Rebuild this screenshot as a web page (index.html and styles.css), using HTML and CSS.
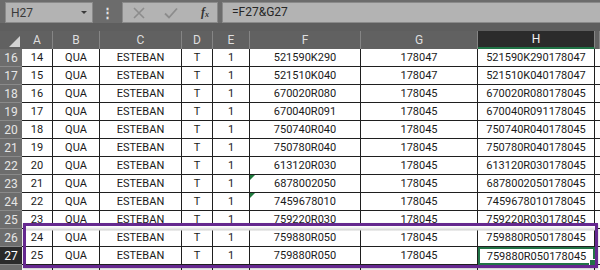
FILE: index.html
```html
<!DOCTYPE html>
<html>
<head>
<meta charset="utf-8">
<link rel="stylesheet" href="styles.css">
</head>
<body>
<div class="toolbar">
  <div class="namebox"><span class="ref">H27</span><span class="dd"></span></div>
  <div class="grip">⋮</div>
  <div class="btns">
    <svg class="ico" width="14" height="14" viewBox="0 0 14 14"><path d="M2 2 L12 12 M12 2 L2 12" stroke="#8c8c8c" stroke-width="1.6" fill="none"/></svg>
    <svg class="ico" width="16" height="14" viewBox="0 0 16 14"><path d="M2 7.5 L6 11.5 L14 2.5" stroke="#8c8c8c" stroke-width="1.8" fill="none"/></svg>
    <span class="fx">f<sub>x</sub></span>
  </div>
  <div class="formula">=F27&amp;G27</div>
</div>
<div class="band"></div>
<div class="sheetwrap">
  <div class="sheet">
    <div class="ch corner"><span class="tri"></span></div>
    <div class="ch">A</div><div class="ch">B</div><div class="ch">C</div><div class="ch">D</div><div class="ch">E</div><div class="ch">F</div><div class="ch">G</div><div class="ch sel">H</div><div class="ch"></div>

    <div class="rh">16</div><div class="c">14</div><div class="c">QUA</div><div class="c">ESTEBAN</div><div class="c">T</div><div class="c">1</div><div class="c">521590K290</div><div class="c">178047</div><div class="c">521590K290178047</div><div class="c x"></div>
    <div class="rh">17</div><div class="c">15</div><div class="c">QUA</div><div class="c">ESTEBAN</div><div class="c">T</div><div class="c">1</div><div class="c">521510K040</div><div class="c">178047</div><div class="c">521510K040178047</div><div class="c x"></div>
    <div class="rh">18</div><div class="c">16</div><div class="c">QUA</div><div class="c">ESTEBAN</div><div class="c">T</div><div class="c">1</div><div class="c">670020R080</div><div class="c">178045</div><div class="c">670020R080178045</div><div class="c x"></div>
    <div class="rh">19</div><div class="c">17</div><div class="c">QUA</div><div class="c">ESTEBAN</div><div class="c">T</div><div class="c">1</div><div class="c">670040R091</div><div class="c">178045</div><div class="c">670040R091178045</div><div class="c x"></div>
    <div class="rh">20</div><div class="c">18</div><div class="c">QUA</div><div class="c">ESTEBAN</div><div class="c">T</div><div class="c">1</div><div class="c">750740R040</div><div class="c">178045</div><div class="c">750740R040178045</div><div class="c x"></div>
    <div class="rh">21</div><div class="c">19</div><div class="c">QUA</div><div class="c">ESTEBAN</div><div class="c">T</div><div class="c">1</div><div class="c">750780R040</div><div class="c">178045</div><div class="c">750780R040178045</div><div class="c x"></div>
    <div class="rh">22</div><div class="c">20</div><div class="c">QUA</div><div class="c">ESTEBAN</div><div class="c">T</div><div class="c">1</div><div class="c">613120R030</div><div class="c">178045</div><div class="c">613120R030178045</div><div class="c x"></div>
    <div class="rh">23</div><div class="c">21</div><div class="c">QUA</div><div class="c">ESTEBAN</div><div class="c">T</div><div class="c">1</div><div class="c txt">6878002050</div><div class="c">178045</div><div class="c">6878002050178045</div><div class="c x"></div>
    <div class="rh">24</div><div class="c">22</div><div class="c">QUA</div><div class="c">ESTEBAN</div><div class="c">T</div><div class="c">1</div><div class="c txt">7459678010</div><div class="c">178045</div><div class="c">7459678010178045</div><div class="c x"></div>
    <div class="rh">25</div><div class="c">23</div><div class="c">QUA</div><div class="c">ESTEBAN</div><div class="c">T</div><div class="c">1</div><div class="c">759220R030</div><div class="c">178045</div><div class="c">759220R030178045</div><div class="c x"></div>
    <div class="rh">26</div><div class="c">24</div><div class="c">QUA</div><div class="c">ESTEBAN</div><div class="c">T</div><div class="c">1</div><div class="c">759880R050</div><div class="c">178045</div><div class="c">759880R050178045</div><div class="c x"></div>
    <div class="rh sel">27</div><div class="c">25</div><div class="c">QUA</div><div class="c">ESTEBAN</div><div class="c">T</div><div class="c">1</div><div class="c">759880R050</div><div class="c">178045</div><div class="c active">759880R050178045</div><div class="c x"></div>
    <div class="rh last"></div><div class="c e"></div><div class="c e"></div><div class="c e"></div><div class="c e"></div><div class="c e"></div><div class="c e"></div><div class="c e"></div><div class="c e"></div><div class="c e x"></div>
  </div>
  <div class="purple"></div>
</div>
</body>
</html>
```
FILE: styles.css
```css
html, body {
  margin: 0;
  padding: 0;
  background: #5e5e5e;
  overflow: hidden;
}
body {
  width: 600px;
  height: 270px;
  font-family: Roboto, "Liberation Sans", sans-serif;
}
.toolbar {
  height: 23px;
  background: #6c6c6c;
  display: flex;
  align-items: flex-start;
  padding-top: 2px;
  box-sizing: border-box;
}
.namebox {
  margin-left: 5px;
  width: 88px;
  height: 21px;
  box-sizing: border-box;
  background: #b3b3b3;
  border: 1px solid #8a8a8a;
  display: flex;
  align-items: center;
  justify-content: space-between;
  padding: 0 5px 0 5px;
  font-size: 12px;
  color: #3a3a3a;
}
.dd {
  width: 0;
  height: 0;
  border-left: 3px solid transparent;
  border-right: 3px solid transparent;
  border-top: 3px solid #3a3a3a;
}
.grip {
  width: 29px;
  text-align: center;
  color: #e4e4e4;
  font-size: 13px;
  line-height: 21px;
  font-weight: bold;
}
.btns {
  width: 96px;
  height: 21px;
  box-sizing: border-box;
  background: #b3b3b3;
  border: 1px solid #8a8a8a;
  display: flex;
  align-items: center;
  padding-left: 9px;
  gap: 17px;
}
.fx {
  font-family: "Liberation Serif", serif;
  font-style: italic;
  font-weight: bold;
  font-size: 12px;
  color: #333;
  margin-left: 5px;
}
.fx sub {
  font-size: 8px;
  vertical-align: -1px;
}
.formula {
  margin-left: 4px;
  flex: 1;
  height: 21px;
  box-sizing: border-box;
  background: #b3b3b3;
  border: 1px solid #8a8a8a;
  border-right: none;
  font-size: 12px;
  color: #262626;
  line-height: 19px;
  padding-left: 9px;
}
.band {
  height: 8px;
  background: #5e5e5e;
}
.sheetwrap {
  position: relative;
}
.sheet {
  display: grid;
  grid-template-columns: 22px 31px 47px 82px 31px 37px 111px 117px 117px 1fr;
  grid-template-rows: 18px;
  grid-auto-rows: 18px;
  font-size: 11px;
}
.ch {
  background: #616161;
  color: #dedede;
  font-size: 12px;
  border-right: 1px solid #858585;
  box-sizing: border-box;
  display: flex;
  align-items: center;
  justify-content: center;
}
.ch.corner {
  position: relative;
  border-right: none;
}
.tri {
  position: absolute;
  right: 2px;
  bottom: 2px;
  width: 0;
  height: 0;
  border-left: 11px solid transparent;
  border-bottom: 11px solid #d2d2d2;
}
.ch.sel {
  background: #2b2b2b;
  color: #f2f2f2;
  border-bottom: 2px solid #217346;
}
.rh {
  background: #6d6d6d;
  color: #e6e6e6;
  font-size: 12px;
  box-sizing: border-box;
  border-bottom: 1px solid #8a8a8a;
  display: flex;
  align-items: center;
  justify-content: center;
}
.rh.sel {
  background: #2a2a2a;
  color: #ffffff;
}
.c {
  background: #fff;
  color: #1a1a1a;
  box-sizing: border-box;
  border-right: 1px solid #1f1f1f;
  border-bottom: 1px solid #1f1f1f;
  display: flex;
  align-items: center;
  justify-content: center;
  white-space: nowrap;
  overflow: hidden;
}
.c.x {
  border-right: none;
}
.c.e {
  border-bottom: none;
}
.c.txt {
  position: relative;
}
.c.txt::before {
  content: "";
  position: absolute;
  left: 0;
  top: 0;
  width: 0;
  height: 0;
  border-top: 5px solid #1f7a3d;
  border-right: 5px solid transparent;
}
.c.active {
  position: relative;
  overflow: visible;
  border: 2px solid #217346;
}
.c.active::after {
  content: "";
  position: absolute;
  right: -3px;
  bottom: -3px;
  width: 5px;
  height: 5px;
  background: #217346;
  border: 1px solid #fff;
}
.purple {
  position: absolute;
  left: 23px;
  top: 192px;
  width: 575px;
  height: 45px;
  box-sizing: border-box;
  border: 3px solid #65288f;
  background: linear-gradient(#ffffff 0, #f0f0f0 2px, #d4d4d4 4px, rgba(255,255,255,0) 5px);
  box-shadow: 0 1px 2px rgba(0,0,0,0.25);
  pointer-events: none;
}
```
